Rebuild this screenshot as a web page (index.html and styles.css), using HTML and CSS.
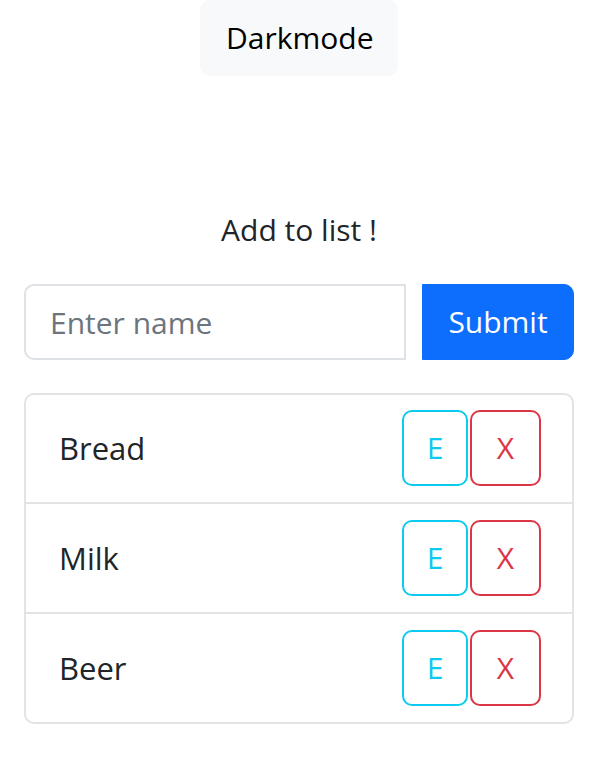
FILE: index.html
```html
<!DOCTYPE html>
<html lang="en">
<head>
<meta charset="utf-8">
<title>List</title>
<link rel="stylesheet" href="styles.css">
</head>
<body>
<div class="top">
  <button class="btn btn-light">Darkmode</button>
</div>
<main class="container">
  <h2 class="title">Add to list !</h2>
  <form class="entry">
    <input class="field" type="text" placeholder="Enter name">
    <button class="btn btn-primary" type="button">Submit</button>
  </form>
  <ul class="list">
    <li class="item">
      <span class="name">Bread</span>
      <span class="actions">
        <button class="btn btn-info" type="button">E</button>
        <button class="btn btn-danger" type="button">X</button>
      </span>
    </li>
    <li class="item">
      <span class="name">Milk</span>
      <span class="actions">
        <button class="btn btn-info" type="button">E</button>
        <button class="btn btn-danger" type="button">X</button>
      </span>
    </li>
    <li class="item">
      <span class="name">Beer</span>
      <span class="actions">
        <button class="btn btn-info" type="button">E</button>
        <button class="btn btn-danger" type="button">X</button>
      </span>
    </li>
  </ul>
  <div class="bottom">
    <button class="btn-wide" type="button" aria-label="Clear list"></button>
  </div>
</main>
</body>
</html>
```

FILE: styles.css
```css
* { box-sizing: border-box; }
html, body { margin: 0; padding: 0; }
body {
  font-family: "Open Sans", "Noto Sans", sans-serif;
  font-size: 30px;
  color: #212529;
  background: #fff;
  overflow: hidden;
}
.top {
  display: flex;
  justify-content: center;
}
.btn {
  font-family: inherit;
  font-size: 30px;
  line-height: 46px;
  padding: 14px 25px;
  border: 1px solid transparent;
  border-radius: 10px;
  background: transparent;
  color: #212529;
  cursor: pointer;
}
.btn-light {
  background: #f8f9fa;
  border-color: #f8f9fa;
  color: #000;
  width: 198px;
}
.container {
  padding: 0 24px;
}
.title {
  margin: 130px 0 30px;
  font-size: 30px;
  font-weight: 400;
  line-height: 48px;
  text-align: center;
}
.entry {
  display: flex;
  gap: 16px;
  margin: 0 0 33px;
}
.field {
  flex: 1;
  min-width: 0;
  height: 76px;
  font-family: inherit;
  font-size: 30px;
  padding: 0 24px;
  border: 2px solid #dee2e6;
  border-radius: 10px 0 0 10px;
  color: #212529;
}
.field::placeholder { color: #6c757d; }
.btn-primary {
  width: 152px;
  padding: 14px 0;
  background: #0d6efd;
  border-color: #0d6efd;
  color: #fff;
  border-radius: 0 10px 10px 0;
}
.list {
  list-style: none;
  margin: 0;
  padding: 0;
  border: 2px solid #e3e3e3;
  border-radius: 10px;
}
.item {
  display: flex;
  align-items: center;
  justify-content: space-between;
  padding: 16px 31px 16px 33px;
  border-top: 2px solid #e3e3e3;
}
.item:first-child { border-top: 0; padding-top: 15px; }
.name { font-size: 31px; }
.actions {
  display: flex;
  gap: 2px;
}
.btn-info {
  width: 66px;
  padding: 13px 0;
  border: 2px solid #0dcaf0;
  color: #0dcaf0;
}
.btn-danger {
  width: 71px;
  padding: 13px 0;
  border: 2px solid #dc3545;
  color: #dc3545;
}
.bottom {
  display: flex;
  justify-content: center;
  margin-top: 53px;
}
.btn-wide {
  width: 188px;
  height: 76px;
  background: #f8f9fa;
  border: 1px solid #f1f2f3;
  border-radius: 10px;
  padding: 0;
}
```
